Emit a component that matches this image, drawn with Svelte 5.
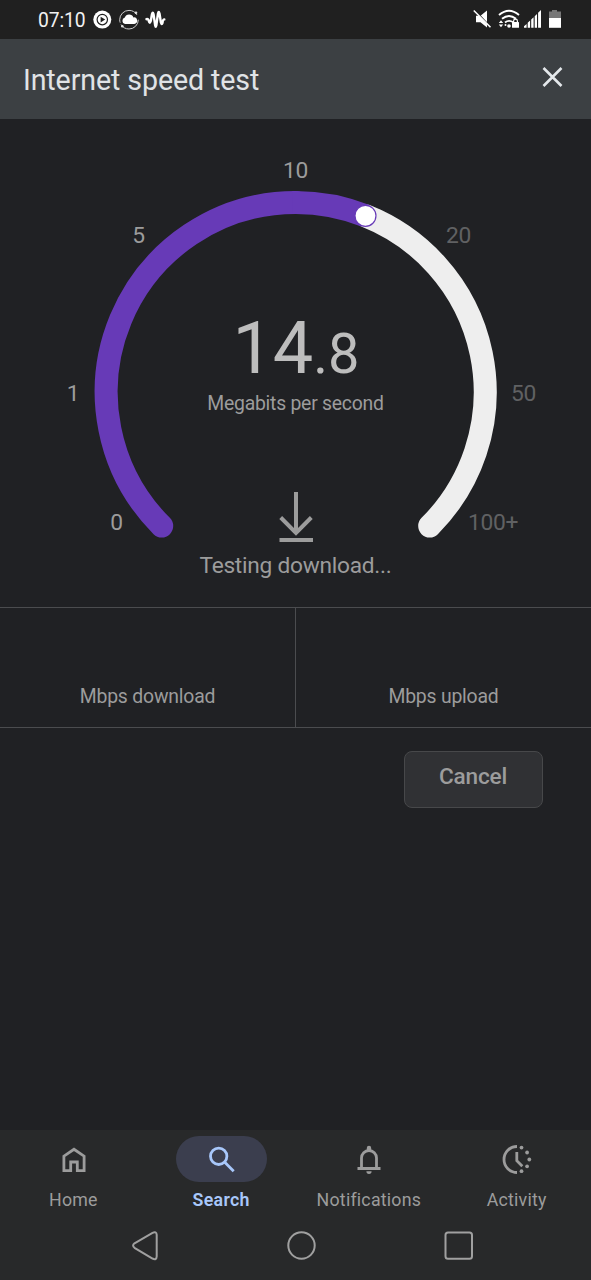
<script>
  const CX = 295.7, CY = 273, R = 189.5;
  let speed = $state('14.8');
  let angle = $state(21.6);

  const ticks = [
    { label: '0', x: 116.5, y: 411, done: true },
    { label: '1', x: 73, y: 281.5, done: true },
    { label: '5', x: 138.5, y: 124, done: true },
    { label: '10', x: 295.5, y: 59, done: true },
    { label: '20', x: 458.5, y: 124, done: false },
    { label: '50', x: 523.5, y: 281.5, done: false },
    { label: '100+', x: 493, y: 411, done: false },
  ];
  const tabs = ['Home', 'Search', 'Notifications', 'Activity'];
  let active = $state('Search');

  // degrees run clockwise from the top of the dial
  function point(deg) {
    const a = deg * Math.PI / 180;
    return { x: CX + R * Math.sin(a), y: CY - R * Math.cos(a) };
  }
  function arc(from, to) {
    const a = point(from), b = point(to);
    return `M${a.x} ${a.y}A${R} ${R} 0 ${to - from > 180 ? 1 : 0} 1 ${b.x} ${b.y}`;
  }
  let knob = $derived(point(angle));
  let parts = $derived(speed.split('.'));
</script>

<div class="phone">
  <div class="status">
    <span class="time">07:10</span>
    <svg class="left-icons" width="76" height="22" viewBox="92 9 76 22">
      <circle cx="102.3" cy="19.6" r="9" fill="#fff"/>
      <circle cx="102.3" cy="19.6" r="5.2" fill="none" stroke="#202020" stroke-width="1.2"/>
      <path d="M100.6 16.8v5.6l4.6-2.8z" fill="#202020"/>
      <circle cx="129" cy="19.7" r="9.3" fill="none" stroke="#ccc" stroke-width="1" stroke-dasharray="24 2 27 5.4"/>
      <path d="M125 24a3.3 3.3 0 0 1-.2-6.4 4.6 4.6 0 0 1 8.6-.2 3.3 3.3 0 0 1 .8 6.6z" fill="#fff"/>
      <circle cx="136" cy="12.8" r="1.3" fill="#ddd"/>
      <circle cx="122.3" cy="26.2" r="1.3" fill="#ddd"/>
      <path d="M146.500 19.200q1.700-.7 2.300 1.800.9 3.600 2 0l1.200-7q.8-2.800 1.500 0l1.700 11.500q.5 2.600 1.100 0l1.700-12q.7-3 1.500 0l1.400 9q.8 3 1.600.3.500-3.400 1.800-3.400" fill="none" stroke="#fff" stroke-width="2.400" stroke-linecap="round" stroke-linejoin="round"/>
    </svg>
    <svg class="right-icons" width="92" height="22" viewBox="472 9 92 22">
      <path d="M476 15.800h4.500L487 10.500v17l-6.500-5.300H476z" fill="#fff"/>
      <path d="M475 10.500L491 27.500" stroke="#202020" stroke-width="1.600"/>
      <path d="M473.800 10.500L490.500 27.300" stroke="#fff" stroke-width="1.500"/>
      <path d="M499 15q10-8.500 20 0M502 18.800q7-5.800 14 0M505 22.500q4-3.200 8.500 0" fill="none" stroke="#fff" stroke-width="1.900"/>
      <path d="M498.800 23l2.200-2.800 2.200 2.800zM498.800 24.400h4.400l-2.200 2.800z" fill="#fff"/>
      <circle cx="509" cy="26" r="1.800" fill="#fff"/><circle cx="505.500" cy="25" r="1" fill="#fff"/>
      <rect x="512" y="22" width="7" height="5.800" rx=".6" fill="#fff"/>
      <path d="M513.600 22.500v-1.500a1.900 1.900 0 0 1 3.800 0v1.500" fill="none" stroke="#fff" stroke-width="1.200"/>
      <path d="M524 27.800v-1.500l2.600-2.300v3.800zM527.700 27.800v-5l2.400-2.300v7.300zM531.200 27.800v-8.300l2.400-2.300v10.600zM534.700 27.800V16.200l2.300-2.300v13.900zM538.100 27.800V12.800L541 10v17.800z" fill="#fff"/>
      <path d="M549 11.500h3V10h5v1.500h4v7h-12z" fill="#777"/>
      <path d="M549 18h12v9.800h-12z" fill="#fff"/>
    </svg>
  </div>

  <header>
    <h1>Internet speed test</h1>
    <button class="close" aria-label="Close">
      <svg width="22" height="22" viewBox="0 0 22 22"><path d="M1.500 2l18 18M19.500 2l-18 18" stroke="#e4e8eb" stroke-width="2.600"/></svg>
    </button>
  </header>

  <svg class="gauge" width="591" height="488" viewBox="0 0 591 488">
    <path class="track" d={arc(angle, 135)}/>
    <path class="bar" d={arc(-135, 0)}/>
    <path class="bar flat" d={arc(-1, angle)}/>
    <circle cx={knob.x} cy={knob.y} r="10.500" fill="#fff" stroke="#673ab7" stroke-width="1.200"/>
    {#each ticks as t}
      <text class="tick" class:done={t.done} x={t.x} y={t.y}>{t.label}</text>
    {/each}
    <text class="value" x="296" y="254">{parts[0]}<tspan class="frac">.{parts[1]}</tspan></text>
    <text class="unit" x="295.500" y="291">Megabits per second</text>
    <path d="M296 373v41M280.700 398.500L296 413.800l15.300-15.300M279.500 421h33.500" fill="none" stroke="#9c9c9c" stroke-width="4"/>
    <text class="phase" x="295.500" y="453.500">Testing download...</text>
  </svg>

  <div class="results">
    <div>Mbps download</div>
    <div>Mbps upload</div>
  </div>

  <div class="actions"><button class="cancel">Cancel</button></div>

  <nav>
    {#each tabs as tab}
      <button class="tab" class:active={tab === active} onclick={() => active = tab}>
        <span class="pill">
          <svg width="32" height="32" viewBox="0 0 32 32" fill="none" stroke="currentColor" stroke-width="2.800">
            {#if tab === 'Home'}
              <path d="M5.900 27.700V13.200L16 6.300l10.100 6.900v14.500h-6.800v-8.700h-6.600v8.700z"/>
            {:else if tab === 'Search'}
              <circle cx="12.700" cy="13.300" r="8.200"/><path d="M18.500 19l9.200 9.200"/>
            {:else if tab === 'Notifications'}
              <path d="M4.500 25.500h23M8.500 25.500V15a7.500 7.500 0 0 1 15 0v10.500"/>
              <path d="M13.400 28.300h5.200a2.600 2.600 0 0 1-5.200 0zM13.800 7.500V5a2.200 2.200 0 0 1 4.400 0v2.500z" fill="currentColor" stroke="none"/>
            {:else}
              <path d="M16 3.500a13 13 0 0 0 0 26M15.800 9v8.700l5.500 5.500"/>
              <g fill="currentColor" stroke="none"><circle cx="20.500" cy="4.600" r="1.900"/><circle cx="26.100" cy="9.500" r="1.900"/><circle cx="28.300" cy="16.500" r="1.900"/><circle cx="26.100" cy="23.300" r="1.900"/><circle cx="20.500" cy="28.200" r="1.900"/></g>
            {/if}
          </svg>
        </span>
        <span class="label">{tab}</span>
      </button>
    {/each}
  </nav>

  <div class="sysbar">
    <svg width="591" height="68" viewBox="0 0 591 68" fill="none" stroke="#a0a0a0" stroke-width="2">
      <path d="M134.500 31.300L152.500 20.800q4-1.800 4.200 2V44.500q-.2 4-4.200 2L134.500 35.800q-2.800-2.200 0-4.500z"/>
      <circle cx="301.500" cy="33.500" r="13.200"/>
      <rect x="445.500" y="20.500" width="26.500" height="26.300" rx="2.500"/>
    </svg>
  </div>
</div>

<style>
  :global(body) { background:#202124; }
  .phone { width:591px;height:1280px;display:flex;flex-direction:column;background:#202124;color:#9c9c9c;font-family:Roboto,sans-serif;overflow:hidden; }
  button { border:0;padding:0;background:none;font-family:inherit;color:inherit; }
  svg { display:block;flex:none; }

  .status { height:39px;box-sizing:border-box;background:#202020;display:flex;align-items:center;padding:0 27px 0 38px; }
  .time { color:#f1f1f1;font-size:19.300px;letter-spacing:-.1px;width:54px;white-space:nowrap;padding-top:1px; }
  .right-icons { margin-left:auto; }

  header { height:80px;box-sizing:border-box;background:#3c4043;display:flex;align-items:center;justify-content:space-between;padding:0 27px 0 23px; }
  h1 { margin:0;padding-top:2px;font-size:28.600px;letter-spacing:-.1px;font-weight:400;color:#e0e3e6; }
  .close { margin-top:-4px; }

  .track, .bar { fill:none;stroke-width:23;stroke-linecap:round; }
  .track { stroke:#eee; }
  .bar { stroke:#673ab7; }
  .flat { stroke-linecap:butt; }
  text { text-anchor:middle;fill:#9c9c9c; }
  .tick { font-size:22.800px;letter-spacing:-.3px;fill:#606163; }
  .done { fill:#9c9c9c; }
  .value { font-size:72px;fill:#bdbdbd; }
  .frac { font-size:56px; }
  .unit { font-size:19.400px;letter-spacing:-.25px; }
  .phase { font-size:22.700px;letter-spacing:-.25px; }

  .results { height:121px;box-sizing:border-box;border-top:1px solid #4b4c4f;border-bottom:1px solid #4b4c4f;display:grid;grid-template-columns:295px 1fr; }
  .results div { display:flex;align-items:flex-end;justify-content:center;padding-bottom:19px;font-size:19.400px;letter-spacing:-.2px;line-height:23px; }
  .results div + div { border-left:1px solid #4b4c4f; }

  .actions { flex:1;display:flex;justify-content:flex-end;align-items:flex-start;padding:23px 48px 0 0; }
  .cancel { width:139px;height:57px;border:1px solid #47484a;border-radius:8px;background:#303134;font-size:22.600px;letter-spacing:-.2px;font-weight:500;padding:0 1px 6px 0; }

  nav { height:82px;background:#28292a;display:grid;grid-template-columns:repeat(4,1fr); }
  .tab { display:flex;flex-direction:column;align-items:center;padding-top:6px; }
  .pill { width:91px;height:46px;border-radius:23px;display:flex;align-items:center;justify-content:center; }
  .label { font-size:17.800px;line-height:22px;letter-spacing:.22px;margin-top:7px;margin-left:-1px; }
  .active { color:#a8c7fa; }
  .active .pill { background:#3b3e4e; }
  .active .label { font-weight:600;letter-spacing:.3px; }
  .sysbar { height:68px;background:#28292a; }
</style>
